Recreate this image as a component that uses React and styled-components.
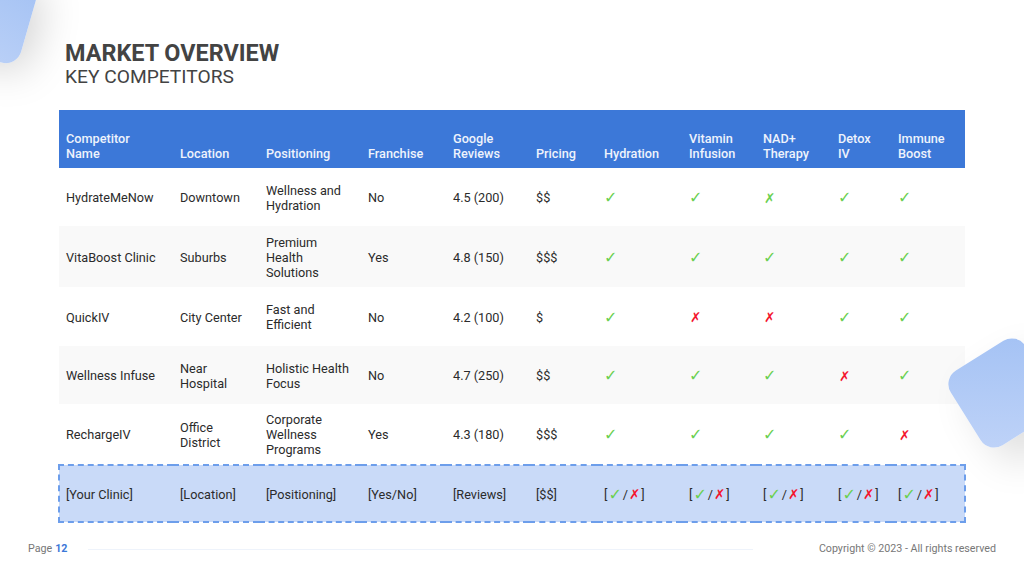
import React from "react";
import styled, { createGlobalStyle } from "styled-components";

const Global = createGlobalStyle`
  html, body { margin: 0; padding: 0; background: #fff; }
  body { font-family: Roboto, "Liberation Sans", sans-serif; }
`;

const Slide = styled.div`
  position: relative;
  width: 1024px;
  height: 576px;
  overflow: hidden;
  background: #fff;
  padding: 41px 59px 0;
  box-sizing: border-box;
`;

const Blob = styled.div`
  position: absolute;
  border-radius: 16px;
`;
const TopBlob = styled(Blob)`
  left: -54px;
  top: -27px;
  width: 84px;
  height: 84px;
  transform: rotate(16deg);
  background: linear-gradient(196deg, #a4c2f4 0%, #bdd2f7 100%);
  box-shadow: 10px 6px 40px rgba(0, 0, 0, 0.17);
`;
const SideBlob = styled(Blob)`
  z-index: 2;
  left: 959px;
  top: 349px;
  width: 88px;
  height: 88px;
  transform: rotate(-32deg);
  background: linear-gradient(212deg, #a4c2f4 0%, #bfd3f8 100%);
  box-shadow: 10px 24px 40px rgba(0, 0, 0, 0.13);
`;

const Header = styled.header`
  position: relative;
  padding-left: 6px;
  margin-bottom: 22px;
  color: #434343;
`;
const Title = styled.h1`
  margin: 0;
  font-size: 23.4px;
  line-height: 25px;
  font-weight: 700;
`;
const Subtitle = styled.h2`
  margin: 0;
  font-size: 19.2px;
  line-height: 22px;
  font-weight: 400;
`;

const Table = styled.table`
  position: relative;
  margin-left: -1px;
  width: 906px;
  table-layout: fixed;
  border-collapse: collapse;
  font-size: 12.7px;
  line-height: 15px;
  color: #2b2b2b;
`;
const Col = styled.col`
  width: ${(p) => p.$w}px;
`;
const Th = styled.th`
  height: 58px;
  box-sizing: border-box;
  padding: 0 7px 7px;
  background: #3c78d8;
  color: #eef3fc;
  font-weight: 500;
  text-align: left;
  vertical-align: bottom;
`;
const Tr = styled.tr`
  background: ${(p) => (p.$alt ? "#f9f9f9" : "#fff")};
`;
const Td = styled.td`
  height: ${(p) => p.$h || 58}px;
  box-sizing: border-box;
  padding: 8px 7px 7px;
  vertical-align: middle;
`;
const YourTd = styled(Td)`
  height: 57px;
  padding: 8px 7px 6px;
  background: #c9daf8;
  border-top: 2px dashed #6d9eeb;
  border-bottom: 2px dashed #6d9eeb;
  &:first-child { border-left: 2px dashed #6d9eeb; padding-left: 6px; }
  &:last-child { border-right: 2px dashed #6d9eeb; }
`;
const Mark = styled.span`
  font-family: "DejaVu Sans", sans-serif;
  font-size: ${(p) => p.$size || 16}px;
  margin-left: ${(p) => p.$shift || 0}px;
  vertical-align: -1px;
  color: ${(p) => p.$c};
`;
const Options = styled.span`
  display: inline-flex;
  align-items: center;
  gap: 1px;
`;

const Footer = styled.footer`
  position: absolute;
  left: 28px;
  right: 28px;
  top: 542px;
  display: flex;
  align-items: center;
  font-size: 10.7px;
  line-height: 14px;
  color: #777;
`;
const PageNum = styled.b`
  margin-left: 3px;
  color: #3c78d8;
  font-weight: 700;
`;
const Rule = styled.div`
  width: 665px;
  height: 1px;
  margin: 1px 0 0 21px;
  background: #eef3fb;
`;
const Copy = styled.span`
  margin-left: auto;
`;

const GREEN = "#6ad04f";
const RED = "#f4142c";
const Y = () => <Mark $c={GREEN}>✓</Mark>;
const N = ({ g, shift = 1 }) => <Mark $c={g ? GREEN : RED} $size={13.5} $shift={shift}>✗</Mark>;

const widths = [114, 86, 102, 85, 83, 68, 85, 74, 75, 60, 74];
const heads = [
  ["Competitor", "Name"], ["Location"], ["Positioning"], ["Franchise"], ["Google", "Reviews"],
  ["Pricing"], ["Hydration"], ["Vitamin", "Infusion"], ["NAD+", "Therapy"], ["Detox", "IV"], ["Immune", "Boost"],
];
const rows = [
  ["HydrateMeNow", "Downtown", "Wellness and Hydration", "No", "4.5 (200)", "$$", "y", "y", "g", "y", "y"],
  ["VitaBoost Clinic", "Suburbs", "Premium Health Solutions", "Yes", "4.8 (150)", "$$$", "y", "y", "y", "y", "y"],
  ["QuickIV", "City Center", "Fast and Efficient", "No", "4.2 (100)", "$", "y", "n", "n", "y", "y"],
  ["Wellness Infuse", "Near Hospital", "Holistic Health Focus", "No", "4.7 (250)", "$$", "y", "y", "y", "n", "y"],
  ["RechargeIV", "Office District", "Corporate Wellness Programs", "Yes", "4.3 (180)", "$$$", "y", "y", "y", "y", "n"],
];
const mine = ["[Your Clinic]", "[Location]", "[Positioning]", "[Yes/No]", "[Reviews]", "[$$]"];
const rowHeights = [58, 61, 59, 58, 61];

const cell = (v) => (v === "y" ? <Y /> : v === "n" ? <N /> : v === "g" ? <N g /> : v);

export default function App() {
  return (
    <Slide>
      <Global />
      <TopBlob />
      <SideBlob />
      <Header>
        <Title>MARKET OVERVIEW</Title>
        <Subtitle>KEY COMPETITORS</Subtitle>
      </Header>
      <Table>
        <colgroup>
          {widths.map((w, i) => <Col key={i} $w={w} />)}
        </colgroup>
        <thead>
          <tr>
            {heads.map((h, i) => (
              <Th key={i}>
                {h.map((l, j) => <React.Fragment key={j}>{j > 0 && <br />}{l}</React.Fragment>)}
              </Th>
            ))}
          </tr>
        </thead>
        <tbody>
          {rows.map((r, i) => (
            <Tr key={i} $alt={i % 2 === 1}>
              {r.map((v, j) => <Td key={j} $h={rowHeights[i]}>{cell(v)}</Td>)}
            </Tr>
          ))}
          <tr>
            {mine.map((v, j) => <YourTd key={j}>{v}</YourTd>)}
            {[0, 1, 2, 3, 4].map((j) => (
              <YourTd key={j}><Options>[<Y />/<N shift={0} />]</Options></YourTd>
            ))}
          </tr>
        </tbody>
      </Table>
      <Footer>
        Page <PageNum>12</PageNum>
        <Rule />
        <Copy>Copyright © 2023 - All rights reserved</Copy>
      </Footer>
    </Slide>
  );
}
